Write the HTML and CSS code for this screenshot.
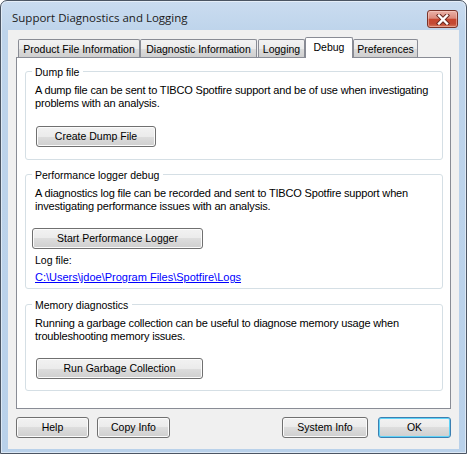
FILE: index.html
```html
<!DOCTYPE html>
<html lang="en">
<head>
<meta charset="utf-8">
<title>Support Diagnostics and Logging</title>
<link rel="stylesheet" href="styles.css">
</head>
<body>
<div class="window">
  <div class="titlebar">
    <span class="title">Support Diagnostics and Logging</span>
    <div class="close" aria-label="Close">
      <svg width="14" height="11" viewBox="0 0 14 11">
        <path d="M3 1.5 L11 9.5 M11 1.5 L3 9.5" stroke="#6b2a22" stroke-width="4.4" stroke-linecap="square" fill="none"/>
        <path d="M3 1.5 L11 9.5 M11 1.5 L3 9.5" stroke="#ffffff" stroke-width="2.4" stroke-linecap="square" fill="none"/>
      </svg>
    </div>
  </div>
  <div class="client">
    <div class="tabs">
      <div class="tab tab-product">Product File Information</div>
      <div class="tab tab-diag">Diagnostic Information</div>
      <div class="tab tab-logging">Logging</div>
      <div class="tab tab-debug active">Debug</div>
      <div class="tab tab-prefs">Preferences</div>
    </div>
    <div class="panel">
      <fieldset class="group group-dump">
        <legend>Dump file</legend>
        <p class="desc">A dump file can be sent to TIBCO Spotfire support and be of use when investigating problems with an analysis.</p>
        <button class="btn btn-dump">Create Dump File</button>
      </fieldset>
      <fieldset class="group group-perf">
        <legend>Performance logger debug</legend>
        <p class="desc">A diagnostics log file can be recorded and sent to TIBCO Spotfire support when investigating performance issues with an analysis.</p>
        <button class="btn btn-perf">Start Performance Logger</button>
        <div class="logfile-label">Log file:</div>
        <a class="logfile-link" href="#">C:\Users\jdoe\Program Files\Spotfire\Logs</a>
      </fieldset>
      <fieldset class="group group-mem">
        <legend>Memory diagnostics</legend>
        <p class="desc">Running a garbage collection can be useful to diagnose memory usage when troubleshooting memory issues.</p>
        <button class="btn btn-gc">Run Garbage Collection</button>
      </fieldset>
    </div>
    <div class="footer">
      <button class="btn btn-foot">Help</button>
      <button class="btn btn-foot btn-copy">Copy Info</button>
      <button class="btn btn-sys">System Info</button>
      <button class="btn btn-foot btn-ok">OK</button>
    </div>
  </div>
</div>
</body>
</html>
```
FILE: styles.css
```css
* { box-sizing: border-box; }
html, body { margin: 0; padding: 0; }
body {
  width: 467px;
  height: 454px;
  overflow: hidden;
  background: #ffffff;
  font-family: "Liberation Sans", Arial, sans-serif;
  font-size: 10.5px;
  color: #000;
}
.window {
  width: 467px;
  height: 454px;
  border: 1px solid #4b5563;
  border-radius: 7px 7px 0 0;
  background: linear-gradient(#cadcf0, #bed4eb 30px, #b9d1ea);
  box-shadow: inset 0 0 0 1px rgba(255,255,255,0.5);
  padding: 0 7px 4px 7px;
  display: flex;
  flex-direction: column;
}
.titlebar {
  height: 29px;
  display: flex;
  align-items: flex-start;
  justify-content: space-between;
  padding: 0 1px 0 4px;
}
.title {
  font-family: "Open Sans", "Liberation Sans", sans-serif;
  font-size: 11.5px;
  line-height: 16px;
  margin-top: 9px;
  color: #1b1b1b;
}
.close {
  width: 31px;
  height: 18px;
  margin-top: 9px;
  border: 1px solid #7a3329;
  border-radius: 3px;
  background: linear-gradient(#eab2a8, #dc8a7c 45%, #c8472f 52%, #c34a35 80%, #d7785c);
  box-shadow: inset 0 0 0 1px rgba(255,220,210,0.45);
  display: flex;
  align-items: center;
  justify-content: center;
}
.client {
  flex: 1;
  background: #f0f0f0;
  padding: 7px 8px 0 8px;
  display: flex;
  flex-direction: column;
}
.tabs {
  height: 20px;
  display: flex;
  align-items: flex-end;
  padding-left: 2px;
}
.tab {
  height: 18px;
  border: 1px solid #898c95;
  border-bottom: none;
  border-radius: 2px 2px 0 0;
  background: linear-gradient(#f2f2f2, #ebebeb 50%, #dddddd 50%, #cfcfcf);
  display: flex;
  align-items: center;
  justify-content: center;
  line-height: 13px;
  padding-top: 1px;
  white-space: nowrap;
}
.tab.active {
  height: 21px;
  margin-bottom: -1px;
  background: #ffffff;
  position: relative;
  z-index: 1;
  padding-top: 0;
  padding-bottom: 2px;
}
.tab-product { width: 122px; }
.tab-diag { width: 117px; }
.tab-logging { width: 47px; margin-left: 1px; }
.tab-debug { width: 48px; }
.tab-prefs { width: 65px; }
.panel {
  height: 352px;
  border: 1px solid #898c95;
  background: #ffffff;
  padding: 5px 7px 0 8px;
}
.group {
  margin: 0;
  min-width: 0;
  border: 1px solid #d5dfe5;
  border-radius: 3px;
  padding: 0 8px 11px 9px;
}
.group legend {
  padding: 3px 4px 0 3px;
  margin-left: -3px;
  line-height: 13px;
}
.group-dump { padding-bottom: 12px; }
.group-perf { margin-top: 6px; padding-bottom: 4px; }
.group-mem { margin-top: 7px; }
.desc {
  margin: 5px 0 0 0;
  font-size: 11px;
  line-height: 13px;
  letter-spacing: -0.17px;
}
.btn {
  height: 21px;
  padding: 0;
  border: 1px solid #707070;
  border-radius: 3px;
  background: linear-gradient(#f2f2f2, #ebebeb 50%, #dddddd 50%, #cfcfcf);
  box-shadow: inset 0 0 0 1px #fbfbfb;
  font-family: inherit;
  font-size: 10.5px;
  line-height: 13px;
  color: #000;
  display: flex;
  align-items: center;
  justify-content: center;
}
.btn-dump { width: 120px; margin: 16px 0 0 1px; }
.btn-perf { width: 171px; margin: 15px 0 0 -3px; }
.btn-gc { width: 167px; margin: 15px 0 0 1px; }
.logfile-label { margin-top: 5px; line-height: 13px; }
.logfile-link {
  display: block;
  margin-top: 4px;
  font-size: 11px;
  line-height: 13px;
  color: #0000ff;
  text-decoration: underline;
  width: max-content;
}
.footer {
  display: flex;
  margin-top: 8px;
}
.btn-foot { width: 73px; }
.btn-copy { margin-left: 8px; }
.btn-sys { width: 86px; margin-left: auto; }
.btn-ok {
  margin-left: 10px;
  border-color: #3c7fb1;
  box-shadow: inset 0 0 0 1px #5fd3f8;
}
```
